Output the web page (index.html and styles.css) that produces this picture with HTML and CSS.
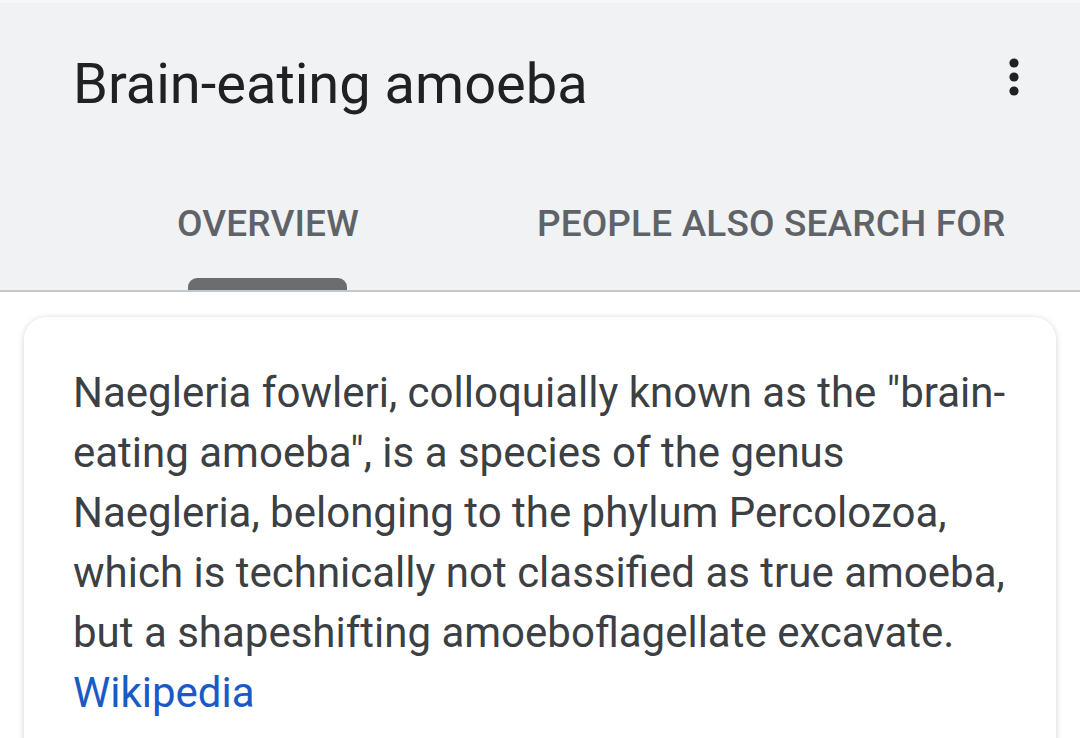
FILE: index.html
```html
<!DOCTYPE html>
<html>
<head>
<meta charset="utf-8">
<link rel="stylesheet" href="styles.css">
</head>
<body>
<div class="header">
  <div class="title-row">
    <h1 class="title">Brain-eating amoeba</h1>
    <svg class="more" width="24" height="40" viewBox="0 0 24 40">
      <circle cx="12" cy="6" r="4.6" fill="#202124"/>
      <circle cx="12" cy="20" r="4.6" fill="#202124"/>
      <circle cx="12" cy="34" r="4.6" fill="#202124"/>
    </svg>
  </div>
  <div class="tabs">
    <div class="tab active"><span class="tab-label">OVERVIEW</span><span class="indicator"></span></div>
    <div class="tab"><span class="tab-label">PEOPLE ALSO SEARCH FOR</span><span class="indicator none"></span></div>
  </div>
</div>
<div class="content">
  <div class="card">
    <p class="desc">Naegleria fowleri, colloquially known as the "brain-<br>eating amoeba", is a species of the genus<br>Naegleria, belonging to the phylum Percolozoa,<br>which is technically not classified as true amoeba,<br>but a shapeshifting amoeboflagellate excavate.<br><a class="source" href="#">Wikipedia</a></p>
  </div>
</div>
</body>
</html>
```

FILE: styles.css
```css
html, body {
  margin: 0;
  padding: 0;
  background: #ffffff;
  font-family: Roboto, "Liberation Sans", sans-serif;
  overflow: hidden;
}
.header {
  background: #f1f2f3;
  border-top: 3px solid #f7f8f9;
  border-bottom: 2px solid #c5c6c8;
}
.title-row {
  height: 127px;
  display: flex;
  align-items: flex-start;
  justify-content: space-between;
  padding: 0 54px 0 73px;
}
.title {
  margin: 51px 0 0 0;
  font-size: 56px;
  line-height: 60px;
  font-weight: 400;
  color: #202124;
  white-space: nowrap;
}
.more {
  margin-top: 54px;
}
.tabs {
  display: flex;
  padding: 74px 0 0 177px;
  gap: 178px;
  box-sizing: border-box;
  height: 160px;
}
.tab {
  display: flex;
  flex-direction: column;
  align-items: center;
}
.tab-label {
  font-size: 37px;
  line-height: 40px;
  font-weight: 500;
  color: #5f6368;
  white-space: nowrap;
  letter-spacing: 0.15px;
}
.indicator {
  margin-top: 34px;
  width: 159px;
  height: 12px;
  background: #6b6e71;
  border-radius: 9px 9px 0 0;
}
.indicator.none {
  background: transparent;
}
.content {
  padding: 25px 24px 0 24px;
}
.card {
  background: #ffffff;
  border-radius: 22px;
  box-shadow: 0 1px 6px rgba(0, 0, 0, 0.18);
  padding: 46px 30px 40px 49px;
  height: 500px;
}
.desc {
  margin: 0;
  font-size: 42px;
  line-height: 60px;
  color: #3c4043;
  white-space: nowrap;
}
.source {
  color: #1a5ac4;
  text-decoration: none;
}
```
